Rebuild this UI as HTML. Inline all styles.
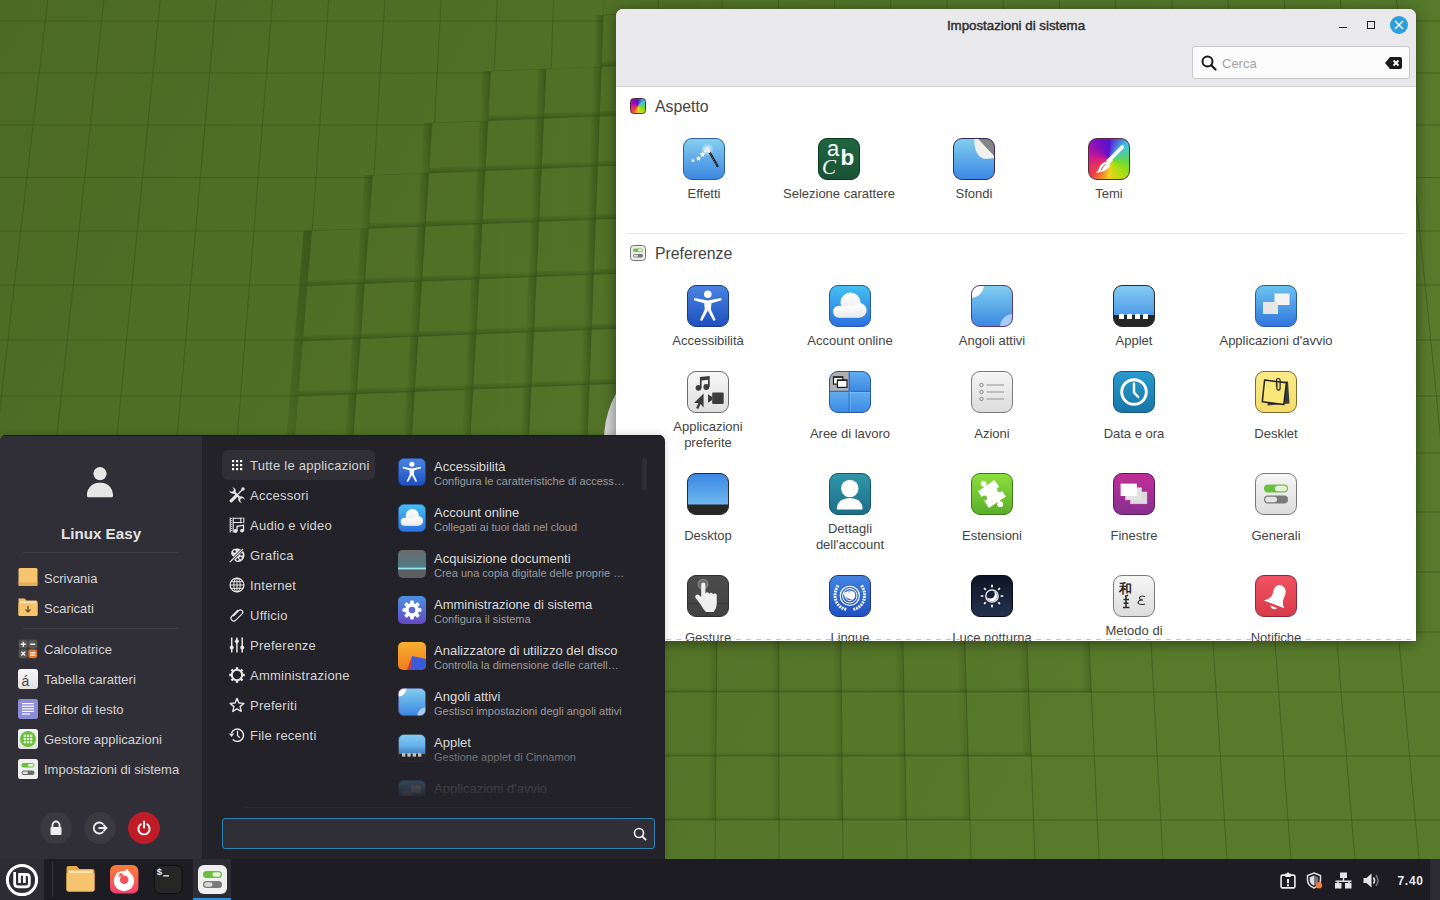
<!DOCTYPE html><html><head><meta charset="utf-8"><style>*{margin:0;padding:0;box-sizing:border-box}
html,body{width:1440px;height:900px;overflow:hidden}
body{position:relative;background:#4e6d27;font-family:"Liberation Sans",sans-serif;}
.abs{position:absolute}
#win{position:absolute;left:616px;top:9px;width:800px;height:632px;background:#fff;border-radius:7px 7px 0 0;overflow:hidden;box-shadow:0 2px 14px rgba(0,0,0,.45)}
#hdr{position:absolute;left:0;top:0;width:800px;height:78px;background:#e9e9ec;border-bottom:1px solid #cfcfd2}
#title{position:absolute;left:0;top:8.5px;width:800px;text-align:center;font-size:13.3px;line-height:16px;font-weight:normal;color:#2e2e2e;-webkit-text-stroke:0.45px #2e2e2e}
.sect{position:absolute;left:39px;font-size:15.8px;line-height:18px;color:#444;white-space:nowrap}
.sicon{position:absolute;left:14px;width:16px;height:16px}
.cell{position:absolute;width:142px;text-align:center;font-size:13px;color:#444;line-height:16px;white-space:nowrap}
.ic{position:absolute;width:42px;height:42px}
#menu{position:absolute;left:0;top:435px;width:665px;height:425px;background:#232228;border-radius:6px 6px 0 0;overflow:hidden;box-shadow:0 0 8px rgba(0,0,0,.18)}
#lpane{position:absolute;left:0;top:0;width:202px;height:425px;background:#302f37}
.mt{position:absolute;font-size:13px;line-height:16px;color:#d4d4d4;white-space:nowrap}
.sub{position:absolute;font-size:11px;line-height:14px;color:#9c9c9c;white-space:nowrap}
#bar{position:absolute;left:0;top:859px;width:1440px;height:41px;background:#1d1c22}
</style></head><body><svg id="wall" width="1440" height="900" style="position:absolute;left:0;top:0"><defs><linearGradient id="shR" x1="0" y1="0" x2="1" y2="0"><stop offset="0" stop-color="#1e3208" stop-opacity="0"/><stop offset="1" stop-color="#1e3208" stop-opacity=".4"/></linearGradient><linearGradient id="shB" x1="0" y1="0" x2="0" y2="1"><stop offset="0" stop-color="#1e3208" stop-opacity="0"/><stop offset="1" stop-color="#1e3208" stop-opacity=".35"/></linearGradient></defs><defs><linearGradient id="wg" x1="0" y1="0" x2="1" y2="0.35"><stop offset="0" stop-color="#4c6a24"/><stop offset="1" stop-color="#587b2b"/></linearGradient></defs><rect width="1440" height="900" fill="url(#wg)"/><path d="M0 -31.0H1440" stroke="#3a541c" stroke-width="1" opacity=".6"/><path d="M0 21.0H1440" stroke="#3a541c" stroke-width="1" opacity=".6"/><path d="M0 73.0H1440" stroke="#3a541c" stroke-width="1" opacity=".6"/><path d="M0 125.0H1440" stroke="#3a541c" stroke-width="1" opacity=".6"/><path d="M0 177.5H1440" stroke="#3a541c" stroke-width="1" opacity=".6"/><path d="M0 231.0H1440" stroke="#3a541c" stroke-width="1" opacity=".6"/><path d="M0 285.0H1440" stroke="#3a541c" stroke-width="1" opacity=".6"/><path d="M0 340.0H1440" stroke="#3a541c" stroke-width="1" opacity=".6"/><path d="M0 396.0H1440" stroke="#3a541c" stroke-width="1" opacity=".6"/><path d="M0 453.0H1440" stroke="#3a541c" stroke-width="1" opacity=".6"/><path d="M0 512.0H1440" stroke="#3a541c" stroke-width="1" opacity=".6"/><path d="M0 572.0H1440" stroke="#3a541c" stroke-width="1" opacity=".6"/><path d="M0 632.0H1440" stroke="#3a541c" stroke-width="1" opacity=".6"/><path d="M0 692.0H1440" stroke="#3a541c" stroke-width="1" opacity=".6"/><path d="M0 756.0H1440" stroke="#3a541c" stroke-width="1" opacity=".6"/><path d="M0 820.0H1440" stroke="#3a541c" stroke-width="1" opacity=".6"/><path d="M0 885.0H1440" stroke="#3a541c" stroke-width="1" opacity=".6"/><path d="M-8.5 0L-121.9 900" stroke="#3a541c" stroke-width="1" opacity=".6"/><path d="M47.7 0L-57.6 900" stroke="#3a541c" stroke-width="1" opacity=".6"/><path d="M103.9 0L6.8 900" stroke="#3a541c" stroke-width="1" opacity=".6"/><path d="M160.1 0L71.1 900" stroke="#3a541c" stroke-width="1" opacity=".6"/><path d="M216.3 0L135.5 900" stroke="#3a541c" stroke-width="1" opacity=".6"/><path d="M272.5 0L199.8 900" stroke="#3a541c" stroke-width="1" opacity=".6"/><path d="M328.7 0L264.2 900" stroke="#3a541c" stroke-width="1" opacity=".6"/><path d="M384.9 0L328.6 900" stroke="#3a541c" stroke-width="1" opacity=".6"/><path d="M441.1 0L392.9 900" stroke="#3a541c" stroke-width="1" opacity=".6"/><path d="M497.3 0L457.3 900" stroke="#3a541c" stroke-width="1" opacity=".6"/><path d="M553.5 0L521.6 900" stroke="#3a541c" stroke-width="1" opacity=".6"/><path d="M609.7 0L586.0 900" stroke="#3a541c" stroke-width="1" opacity=".6"/><path d="M665.9 0L650.4 900" stroke="#3a541c" stroke-width="1" opacity=".6"/><path d="M722.1 0L714.7 900" stroke="#3a541c" stroke-width="1" opacity=".6"/><path d="M778.3 0L779.1 900" stroke="#3a541c" stroke-width="1" opacity=".6"/><path d="M834.5 0L843.4 900" stroke="#3a541c" stroke-width="1" opacity=".6"/><path d="M890.7 0L907.8 900" stroke="#3a541c" stroke-width="1" opacity=".6"/><path d="M946.9 0L972.1 900" stroke="#3a541c" stroke-width="1" opacity=".6"/><path d="M1003.1 0L1036.5 900" stroke="#3a541c" stroke-width="1" opacity=".6"/><path d="M1059.3 0L1100.9 900" stroke="#3a541c" stroke-width="1" opacity=".6"/><path d="M1115.5 0L1165.2 900" stroke="#3a541c" stroke-width="1" opacity=".6"/><path d="M1171.7 0L1229.6 900" stroke="#3a541c" stroke-width="1" opacity=".6"/><path d="M1227.9 0L1293.9 900" stroke="#3a541c" stroke-width="1" opacity=".6"/><path d="M1284.1 0L1358.3 900" stroke="#3a541c" stroke-width="1" opacity=".6"/><path d="M1340.3 0L1422.7 900" stroke="#3a541c" stroke-width="1" opacity=".6"/><path d="M1396.5 0L1487.0 900" stroke="#3a541c" stroke-width="1" opacity=".6"/><path d="M1452.7 0L1551.4 900" stroke="#3a541c" stroke-width="1" opacity=".6"/><path d="M1508.9 0L1615.7 900" stroke="#3a541c" stroke-width="1" opacity=".6"/><path d="M647.0 632.0L655.0 632.0L653.9 692.0L645.9 692.0z" fill="url(#shR)" opacity=".55"/><path d="M591.5 687.0L653.9 687.0L653.9 692.0L591.5 692.0z" fill="url(#shB)" opacity=".55"/><path d="M708.9 632.0L716.9 632.0L716.4 692.0L708.4 692.0z" fill="url(#shR)" opacity=".55"/><path d="M653.9 687.0L716.4 687.0L716.4 692.0L653.9 692.0z" fill="url(#shB)" opacity=".55"/><path d="M770.8 632.0L778.8 632.0L778.9 692.0L770.9 692.0z" fill="url(#shR)" opacity=".55"/><path d="M716.4 687.0L778.9 687.0L778.9 692.0L716.4 692.0z" fill="url(#shB)" opacity=".55"/><path d="M832.8 632.0L840.8 632.0L841.4 692.0L833.4 692.0z" fill="url(#shR)" opacity=".55"/><path d="M778.9 687.0L841.4 687.0L841.4 692.0L778.9 692.0z" fill="url(#shB)" opacity=".55"/><path d="M894.7 632.0L902.7 632.0L903.8 692.0L895.8 692.0z" fill="url(#shR)" opacity=".55"/><path d="M841.4 687.0L903.8 687.0L903.8 692.0L841.4 692.0z" fill="url(#shB)" opacity=".55"/><path d="M956.6 632.0L964.6 632.0L966.3 692.0L958.3 692.0z" fill="url(#shR)" opacity=".55"/><path d="M903.8 687.0L966.3 687.0L966.3 692.0L903.8 692.0z" fill="url(#shB)" opacity=".55"/><path d="M1018.6 632.0L1026.6 632.0L1028.8 692.0L1020.8 692.0z" fill="url(#shR)" opacity=".55"/><path d="M966.3 687.0L1028.8 687.0L1028.8 692.0L966.3 692.0z" fill="url(#shB)" opacity=".55"/><path d="M1080.5 632.0L1088.5 632.0L1091.3 692.0L1083.3 692.0z" fill="url(#shR)" opacity=".55"/><path d="M1028.8 687.0L1091.3 687.0L1091.3 692.0L1028.8 692.0z" fill="url(#shB)" opacity=".55"/><path d="M645.9 692.0L653.9 692.0L652.8 756.0L644.8 756.0z" fill="url(#shR)" opacity=".55"/><path d="M589.8 751.0L652.8 751.0L652.8 756.0L589.8 756.0z" fill="url(#shB)" opacity=".55"/><path d="M708.4 692.0L716.4 692.0L715.9 756.0L707.9 756.0z" fill="url(#shR)" opacity=".55"/><path d="M652.8 751.0L715.9 751.0L715.9 756.0L652.8 756.0z" fill="url(#shB)" opacity=".55"/><path d="M770.9 692.0L778.9 692.0L778.9 756.0L770.9 756.0z" fill="url(#shR)" opacity=".55"/><path d="M715.9 751.0L778.9 751.0L778.9 756.0L715.9 756.0z" fill="url(#shB)" opacity=".55"/><path d="M833.4 692.0L841.4 692.0L842.0 756.0L834.0 756.0z" fill="url(#shR)" opacity=".55"/><path d="M778.9 751.0L842.0 751.0L842.0 756.0L778.9 756.0z" fill="url(#shB)" opacity=".55"/><path d="M895.8 692.0L903.8 692.0L905.1 756.0L897.1 756.0z" fill="url(#shR)" opacity=".55"/><path d="M842.0 751.0L905.1 751.0L905.1 756.0L842.0 756.0z" fill="url(#shB)" opacity=".55"/><path d="M958.3 692.0L966.3 692.0L968.1 756.0L960.1 756.0z" fill="url(#shR)" opacity=".55"/><path d="M905.1 751.0L968.1 751.0L968.1 756.0L905.1 756.0z" fill="url(#shB)" opacity=".55"/><path d="M1020.8 692.0L1028.8 692.0L1031.2 756.0L1023.2 756.0z" fill="url(#shR)" opacity=".55"/><path d="M968.1 751.0L1031.2 751.0L1031.2 756.0L968.1 756.0z" fill="url(#shB)" opacity=".55"/><path d="M644.8 756.0L652.8 756.0L651.7 820.0L643.7 820.0z" fill="url(#shR)" opacity=".55"/><path d="M588.1 815.0L651.7 815.0L651.7 820.0L588.1 820.0z" fill="url(#shB)" opacity=".55"/><path d="M707.9 756.0L715.9 756.0L715.4 820.0L707.4 820.0z" fill="url(#shR)" opacity=".55"/><path d="M651.7 815.0L715.4 815.0L715.4 820.0L651.7 820.0z" fill="url(#shB)" opacity=".55"/><path d="M770.9 756.0L778.9 756.0L779.0 820.0L771.0 820.0z" fill="url(#shR)" opacity=".55"/><path d="M715.4 815.0L779.0 815.0L779.0 820.0L715.4 820.0z" fill="url(#shB)" opacity=".55"/><path d="M834.0 756.0L842.0 756.0L842.6 820.0L834.6 820.0z" fill="url(#shR)" opacity=".55"/><path d="M779.0 815.0L842.6 815.0L842.6 820.0L779.0 820.0z" fill="url(#shB)" opacity=".55"/><path d="M897.1 756.0L905.1 756.0L906.3 820.0L898.3 820.0z" fill="url(#shR)" opacity=".55"/><path d="M842.6 815.0L906.3 815.0L906.3 820.0L842.6 820.0z" fill="url(#shB)" opacity=".55"/><path d="M960.1 756.0L968.1 756.0L969.9 820.0L961.9 820.0z" fill="url(#shR)" opacity=".55"/><path d="M906.3 815.0L969.9 815.0L969.9 820.0L906.3 820.0z" fill="url(#shB)" opacity=".55"/><clipPath id="rc"><path d="M605.2 -37.2L603.2 14.9L601.3 66.4L490.6 70.9L487.8 120.5L432.0 122.7L428.7 172.9L372.4 175.1L368.4 228.3L311.6 230.5L283.6 566.7L700.0 566.7L700.0 -40.0z"/></clipPath><g clip-path="url(#rc)"><rect width="1440" height="900" fill="url(#wg)"/><path d="M650.0 12.7L658.0 12.7L656.5 64.2L648.5 64.2z" fill="url(#shR)"/><path d="M601.3 61.4L656.5 59.2L656.5 64.2L601.3 66.4z" fill="url(#shB)"/><path d="M704.8 10.5L712.8 10.5L711.8 62.0L703.8 62.0z" fill="url(#shR)"/><path d="M656.5 59.2L711.8 57.0L711.8 62.0L656.5 64.2z" fill="url(#shB)"/><path d="M538.0 68.7L546.0 68.7L543.6 118.3L535.6 118.3z" fill="url(#shR)"/><path d="M487.8 115.5L543.6 113.3L543.6 118.3L487.8 120.5z" fill="url(#shB)"/><path d="M593.3 66.4L601.3 66.4L599.4 116.0L591.4 116.0z" fill="url(#shR)"/><path d="M543.6 113.3L599.4 111.0L599.4 116.0L543.6 118.3z" fill="url(#shB)"/><path d="M648.5 64.2L656.5 64.2L655.1 113.8L647.1 113.8z" fill="url(#shR)"/><path d="M599.4 111.0L655.1 108.8L655.1 113.8L599.4 116.0z" fill="url(#shB)"/><path d="M703.8 62.0L711.8 62.0L710.8 111.6L702.8 111.6z" fill="url(#shR)"/><path d="M655.1 108.8L710.8 106.6L710.8 111.6L655.1 113.8z" fill="url(#shB)"/><path d="M479.8 120.5L487.8 120.5L485.0 170.6L477.0 170.6z" fill="url(#shR)"/><path d="M428.7 167.9L485.0 165.6L485.0 170.6L428.7 172.9z" fill="url(#shB)"/><path d="M535.6 118.3L543.6 118.3L541.3 168.3L533.3 168.3z" fill="url(#shR)"/><path d="M485.0 165.6L541.3 163.3L541.3 168.3L485.0 170.6z" fill="url(#shB)"/><path d="M591.4 116.0L599.4 116.0L597.5 166.1L589.5 166.1z" fill="url(#shR)"/><path d="M541.3 163.3L597.5 161.1L597.5 166.1L541.3 168.3z" fill="url(#shB)"/><path d="M647.1 113.8L655.1 113.8L653.7 163.9L645.7 163.9z" fill="url(#shR)"/><path d="M597.5 161.1L653.7 158.9L653.7 163.9L597.5 166.1z" fill="url(#shB)"/><path d="M702.8 111.6L710.8 111.6L709.8 161.6L701.8 161.6z" fill="url(#shR)"/><path d="M653.7 158.9L709.8 156.6L709.8 161.6L653.7 163.9z" fill="url(#shB)"/><path d="M420.7 172.9L428.7 172.9L425.3 226.0L417.3 226.0z" fill="url(#shR)"/><path d="M368.4 223.3L425.3 221.0L425.3 226.0L368.4 228.3z" fill="url(#shB)"/><path d="M477.0 170.6L485.0 170.6L482.0 223.7L474.0 223.7z" fill="url(#shR)"/><path d="M425.3 221.0L482.0 218.7L482.0 223.7L425.3 226.0z" fill="url(#shB)"/><path d="M533.3 168.3L541.3 168.3L538.8 221.4L530.8 221.4z" fill="url(#shR)"/><path d="M482.0 218.7L538.8 216.4L538.8 221.4L482.0 223.7z" fill="url(#shB)"/><path d="M589.5 166.1L597.5 166.1L595.5 219.2L587.5 219.2z" fill="url(#shR)"/><path d="M538.8 216.4L595.5 214.2L595.5 219.2L538.8 221.4z" fill="url(#shB)"/><path d="M645.7 163.9L653.7 163.9L652.1 216.9L644.1 216.9z" fill="url(#shR)"/><path d="M595.5 214.2L652.1 211.9L652.1 216.9L595.5 219.2z" fill="url(#shB)"/><path d="M701.8 161.6L709.8 161.6L708.8 214.6L700.8 214.6z" fill="url(#shR)"/><path d="M652.1 211.9L708.8 209.6L708.8 214.6L652.1 216.9z" fill="url(#shB)"/><path d="M360.4 228.3L368.4 228.3L364.3 283.4L356.3 283.4z" fill="url(#shR)"/><path d="M307.0 280.7L364.3 278.4L364.3 283.4L307.0 285.7z" fill="url(#shB)"/><path d="M417.3 226.0L425.3 226.0L421.7 281.1L413.7 281.1z" fill="url(#shR)"/><path d="M364.3 278.4L421.7 276.1L421.7 281.1L364.3 283.4z" fill="url(#shB)"/><path d="M474.0 223.7L482.0 223.7L479.0 278.8L471.0 278.8z" fill="url(#shR)"/><path d="M421.7 276.1L479.0 273.8L479.0 278.8L421.7 281.1z" fill="url(#shB)"/><path d="M530.8 221.4L538.8 221.4L536.2 276.6L528.2 276.6z" fill="url(#shR)"/><path d="M479.0 273.8L536.2 271.6L536.2 276.6L479.0 278.8z" fill="url(#shB)"/><path d="M587.5 219.2L595.5 219.2L593.4 274.3L585.4 274.3z" fill="url(#shR)"/><path d="M536.2 271.6L593.4 269.3L593.4 274.3L536.2 276.6z" fill="url(#shB)"/><path d="M644.1 216.9L652.1 216.9L650.5 272.0L642.5 272.0z" fill="url(#shR)"/><path d="M593.4 269.3L650.5 267.0L650.5 272.0L593.4 274.3z" fill="url(#shB)"/><path d="M700.8 214.6L708.8 214.6L707.7 269.7L699.7 269.7z" fill="url(#shR)"/><path d="M650.5 267.0L707.7 264.7L707.7 269.7L650.5 272.0z" fill="url(#shB)"/><path d="M356.3 283.4L364.3 283.4L360.3 338.6L352.3 338.6z" fill="url(#shR)"/><path d="M302.4 335.9L360.3 333.6L360.3 338.6L302.4 340.9z" fill="url(#shB)"/><path d="M413.7 281.1L421.7 281.1L418.1 336.3L410.1 336.3z" fill="url(#shR)"/><path d="M360.3 333.6L418.1 331.3L418.1 336.3L360.3 338.6z" fill="url(#shB)"/><path d="M471.0 278.8L479.0 278.8L475.9 334.0L467.9 334.0z" fill="url(#shR)"/><path d="M418.1 331.3L475.9 329.0L475.9 334.0L418.1 336.3z" fill="url(#shB)"/><path d="M528.2 276.6L536.2 276.6L533.6 331.7L525.6 331.7z" fill="url(#shR)"/><path d="M475.9 329.0L533.6 326.7L533.6 331.7L475.9 334.0z" fill="url(#shB)"/><path d="M585.4 274.3L593.4 274.3L591.3 329.3L583.3 329.3z" fill="url(#shR)"/><path d="M533.6 326.7L591.3 324.3L591.3 329.3L533.6 331.7z" fill="url(#shB)"/><path d="M642.5 272.0L650.5 272.0L649.0 327.0L641.0 327.0z" fill="url(#shR)"/><path d="M591.3 324.3L649.0 322.0L649.0 327.0L591.3 329.3z" fill="url(#shB)"/><path d="M699.7 269.7L707.7 269.7L706.6 324.7L698.6 324.7z" fill="url(#shR)"/><path d="M649.0 322.0L706.6 319.7L706.6 324.7L649.0 327.0z" fill="url(#shB)"/><path d="M352.3 338.6L360.3 338.6L356.2 393.8L348.2 393.8z" fill="url(#shR)"/><path d="M297.8 391.1L356.2 388.8L356.2 393.8L297.8 396.1z" fill="url(#shB)"/><path d="M410.1 336.3L418.1 336.3L414.5 391.4L406.5 391.4z" fill="url(#shR)"/><path d="M356.2 388.8L414.5 386.4L414.5 391.4L356.2 393.8z" fill="url(#shB)"/><path d="M467.9 334.0L475.9 334.0L472.8 389.1L464.8 389.1z" fill="url(#shR)"/><path d="M414.5 386.4L472.8 384.1L472.8 389.1L414.5 391.4z" fill="url(#shB)"/><path d="M525.6 331.7L533.6 331.7L531.0 386.8L523.0 386.8z" fill="url(#shR)"/><path d="M472.8 384.1L531.0 381.8L531.0 386.8L472.8 389.1z" fill="url(#shB)"/><path d="M583.3 329.3L591.3 329.3L589.2 384.4L581.2 384.4z" fill="url(#shR)"/><path d="M531.0 381.8L589.2 379.4L589.2 384.4L531.0 386.8z" fill="url(#shB)"/><path d="M641.0 327.0L649.0 327.0L647.4 382.1L639.4 382.1z" fill="url(#shR)"/><path d="M589.2 379.4L647.4 377.1L647.4 382.1L589.2 384.4z" fill="url(#shB)"/><path d="M698.6 324.7L706.6 324.7L705.5 379.8L697.5 379.8z" fill="url(#shR)"/><path d="M647.4 377.1L705.5 374.8L705.5 379.8L647.4 382.1z" fill="url(#shB)"/><path d="M348.2 393.8L356.2 393.8L352.1 448.9L344.1 448.9z" fill="url(#shR)"/><path d="M293.2 446.3L352.1 443.9L352.1 448.9L293.2 451.3z" fill="url(#shB)"/><path d="M406.5 391.4L414.5 391.4L410.9 446.6L402.9 446.6z" fill="url(#shR)"/><path d="M352.1 443.9L410.9 441.6L410.9 446.6L352.1 448.9z" fill="url(#shB)"/><path d="M464.8 389.1L472.8 389.1L469.7 444.2L461.7 444.2z" fill="url(#shR)"/><path d="M410.9 441.6L469.7 439.2L469.7 444.2L410.9 446.6z" fill="url(#shB)"/><path d="M523.0 386.8L531.0 386.8L528.4 441.9L520.4 441.9z" fill="url(#shR)"/><path d="M469.7 439.2L528.4 436.9L528.4 441.9L469.7 444.2z" fill="url(#shB)"/><path d="M581.2 384.4L589.2 384.4L587.1 439.5L579.1 439.5z" fill="url(#shR)"/><path d="M528.4 436.9L587.1 434.5L587.1 439.5L528.4 441.9z" fill="url(#shB)"/><path d="M639.4 382.1L647.4 382.1L645.8 437.2L637.8 437.2z" fill="url(#shR)"/><path d="M587.1 434.5L645.8 432.2L645.8 437.2L587.1 439.5z" fill="url(#shB)"/><path d="M697.5 379.8L705.5 379.8L704.4 434.8L696.4 434.8z" fill="url(#shR)"/><path d="M645.8 432.2L704.4 429.8L704.4 434.8L645.8 437.2z" fill="url(#shB)"/><path d="M344.1 448.9L352.1 448.9L348.0 504.1L340.0 504.1z" fill="url(#shR)"/><path d="M288.6 501.5L348.0 499.1L348.0 504.1L288.6 506.5z" fill="url(#shB)"/><path d="M402.9 446.6L410.9 446.6L407.3 501.7L399.3 501.7z" fill="url(#shR)"/><path d="M348.0 499.1L407.3 496.7L407.3 501.7L348.0 504.1z" fill="url(#shB)"/><path d="M461.7 444.2L469.7 444.2L466.6 499.3L458.6 499.3z" fill="url(#shR)"/><path d="M407.3 496.7L466.6 494.3L466.6 499.3L407.3 501.7z" fill="url(#shB)"/><path d="M520.4 441.9L528.4 441.9L525.8 497.0L517.8 497.0z" fill="url(#shR)"/><path d="M466.6 494.3L525.8 492.0L525.8 497.0L466.6 499.3z" fill="url(#shB)"/><path d="M579.1 439.5L587.1 439.5L585.0 494.6L577.0 494.6z" fill="url(#shR)"/><path d="M525.8 492.0L585.0 489.6L585.0 494.6L525.8 497.0z" fill="url(#shB)"/><path d="M637.8 437.2L645.8 437.2L644.2 492.2L636.2 492.2z" fill="url(#shR)"/><path d="M585.0 489.6L644.2 487.2L644.2 492.2L585.0 494.6z" fill="url(#shB)"/><path d="M696.4 434.8L704.4 434.8L703.3 489.9L695.3 489.9z" fill="url(#shR)"/><path d="M644.2 487.2L703.3 484.9L703.3 489.9L644.2 492.2z" fill="url(#shB)"/><path d="M340.0 504.1L348.0 504.1L343.5 564.3L335.5 564.3z" fill="url(#shR)"/><path d="M283.6 561.7L343.5 559.3L343.5 564.3L283.6 566.7z" fill="url(#shB)"/><path d="M399.3 501.7L407.3 501.7L403.4 561.9L395.4 561.9z" fill="url(#shR)"/><path d="M343.5 559.3L403.4 556.9L403.4 561.9L343.5 564.3z" fill="url(#shB)"/><path d="M458.6 499.3L466.6 499.3L463.2 559.5L455.2 559.5z" fill="url(#shR)"/><path d="M403.4 556.9L463.2 554.5L463.2 559.5L403.4 561.9z" fill="url(#shB)"/><path d="M517.8 497.0L525.8 497.0L523.0 557.1L515.0 557.1z" fill="url(#shR)"/><path d="M463.2 554.5L523.0 552.1L523.0 557.1L463.2 559.5z" fill="url(#shB)"/><path d="M577.0 494.6L585.0 494.6L582.7 554.7L574.7 554.7z" fill="url(#shR)"/><path d="M523.0 552.1L582.7 549.7L582.7 554.7L523.0 557.1z" fill="url(#shB)"/><path d="M636.2 492.2L644.2 492.2L642.5 552.3L634.5 552.3z" fill="url(#shR)"/><path d="M582.7 549.7L642.5 547.3L642.5 552.3L582.7 554.7z" fill="url(#shB)"/><path d="M695.3 489.9L703.3 489.9L702.1 549.9L694.1 549.9z" fill="url(#shR)"/><path d="M642.5 547.3L702.1 544.9L702.1 549.9L642.5 552.3z" fill="url(#shB)"/><path d="M0.0 -13.0L700.0 -41.0" stroke="#3a541c" stroke-width="1" opacity=".6" fill="none"/><path d="M0.0 39.0L700.0 11.0" stroke="#3a541c" stroke-width="1" opacity=".6" fill="none"/><path d="M0.0 90.5L700.0 62.5" stroke="#3a541c" stroke-width="1" opacity=".6" fill="none"/><path d="M0.0 140.0L700.0 112.0" stroke="#3a541c" stroke-width="1" opacity=".6" fill="none"/><path d="M0.0 190.0L700.0 162.0" stroke="#3a541c" stroke-width="1" opacity=".6" fill="none"/><path d="M0.0 243.0L700.0 215.0" stroke="#3a541c" stroke-width="1" opacity=".6" fill="none"/><path d="M0.0 298.0L700.0 270.0" stroke="#3a541c" stroke-width="1" opacity=".6" fill="none"/><path d="M0.0 353.0L700.0 325.0" stroke="#3a541c" stroke-width="1" opacity=".6" fill="none"/><path d="M0.0 408.0L700.0 380.0" stroke="#3a541c" stroke-width="1" opacity=".6" fill="none"/><path d="M0.0 463.0L700.0 435.0" stroke="#3a541c" stroke-width="1" opacity=".6" fill="none"/><path d="M0.0 518.0L700.0 490.0" stroke="#3a541c" stroke-width="1" opacity=".6" fill="none"/><path d="M0.0 578.0L700.0 550.0" stroke="#3a541c" stroke-width="1" opacity=".6" fill="none"/><path d="M279.9 -40L193.0 900" stroke="#3a541c" stroke-width="1" opacity=".6"/><path d="M334.1 -40L255.8 900" stroke="#3a541c" stroke-width="1" opacity=".6"/><path d="M388.4 -40L318.6 900" stroke="#3a541c" stroke-width="1" opacity=".6"/><path d="M442.6 -40L381.3 900" stroke="#3a541c" stroke-width="1" opacity=".6"/><path d="M496.8 -40L444.1 900" stroke="#3a541c" stroke-width="1" opacity=".6"/><path d="M551.1 -40L506.9 900" stroke="#3a541c" stroke-width="1" opacity=".6"/><path d="M605.3 -40L569.6 900" stroke="#3a541c" stroke-width="1" opacity=".6"/><path d="M659.6 -40L632.4 900" stroke="#3a541c" stroke-width="1" opacity=".6"/><path d="M713.8 -40L695.2 900" stroke="#3a541c" stroke-width="1" opacity=".6"/></g><path d="M595.2 14.9L603.2 14.9L601.3 66.4L593.3 66.4z" fill="url(#shR)"/><path d="M482.6 70.9L490.6 70.9L487.8 120.5L479.8 120.5z" fill="url(#shR)"/><path d="M424.0 122.7L432.0 122.7L428.7 172.9L420.7 172.9z" fill="url(#shR)"/><path d="M364.4 175.1L372.4 175.1L368.4 228.3L360.4 228.3z" fill="url(#shR)"/><path d="M303.6 230.5L311.6 230.5L283.6 566.7L275.6 566.7z" fill="url(#shR)"/><defs><linearGradient id="gc" x1="0" y1="0" x2="1" y2="0"><stop offset="0" stop-color="#d8d8d8"/><stop offset="1" stop-color="#8a8a8a"/></linearGradient></defs><circle cx="700" cy="440" r="96" fill="url(#gc)"/></svg>
<div id="win"><div id="hdr"><div id="title">Impostazioni di sistema</div><div class="abs" style="left:723px;top:17.6px;width:8px;height:1.3px;background:#222"></div><div class="abs" style="left:751px;top:12px;width:8px;height:8px;border:1.4px solid #222"></div><div class="abs" style="left:774px;top:7px;width:18px;height:18px;border-radius:50%;background:#2a9fde"></div><svg width="18" height="18" viewBox="0 0 18 18" style="position:absolute;left:774px;top:7px"><path d="M5 5L13 13M13 5L5 13" stroke="#fff" stroke-width="1.5"/></svg><div class="abs" style="left:576px;top:37px;width:218px;height:33px;background:#fbfbfb;border:1px solid #c9c9cc;border-radius:3px"></div><svg width="16" height="16" viewBox="0 0 16 16" style="position:absolute;left:585px;top:46px"><circle cx="6.5" cy="6.5" r="5" fill="none" stroke="#1a1a1a" stroke-width="2"/><path d="M10.3 10.3L14.5 14.5" stroke="#1a1a1a" stroke-width="2.2" stroke-linecap="round"/></svg><div class="abs" style="left:606px;top:46.5px;font-size:13px;line-height:16px;color:#a3a3a3">Cerca</div><svg width="17" height="12" viewBox="0 0 17 12" style="position:absolute;left:769px;top:48px"><path d="M5 0H15a2 2 0 0 1 2 2v8a2 2 0 0 1-2 2H5L0 6z" fill="#1a1a1a"/><path d="M8.5 3.5l5 5M13.5 3.5l-5 5" stroke="#fff" stroke-width="1.8"/></svg></div><div class="sicon" style="top:89px;border-radius:3.5px;border:1px solid #5a2a40;background:conic-gradient(from 0deg,#5a10d0,#3fc4e0 50deg,#6ad83a 100deg,#a8e010 135deg,#f0d020 180deg,#f04040 225deg,#d01890 275deg,#8010c0 320deg,#5a10d0)"></div><div class="sect" style="top:88.6px">Aspetto</div><div class="abs" style="left:10px;top:224px;width:780px;height:1px;background:#e4e4e6"></div><div class="sicon" style="top:236px"><svg width="16" height="16" viewBox="0 0 16 16" style="position:absolute;"><rect x=".5" y=".5" width="15" height="15" rx="3" fill="#ececec" stroke="#777" stroke-width="1"/><rect x="3" y="3.5" width="10" height="3.5" rx="1.75" fill="#70c040"/><rect x="3" y="9" width="10" height="3.5" rx="1.75" fill="#777"/><rect x="8" y="4.2" width="4.3" height="2.1" rx="1" fill="#e8f8e0"/><rect x="3.7" y="9.7" width="4.3" height="2.1" rx="1" fill="#ddd"/></svg></div><div class="sect" style="top:235.8px">Preferenze</div><div class="ic" style="left:67px;top:129px"><svg width="42" height="42" viewBox="0 0 42 42" style="position:absolute;"><defs><linearGradient id="g1" x1="0" y1="0" x2="0" y2="1"><stop offset="0" stop-color="#86d0f0"/><stop offset="1" stop-color="#3a86e0"/></linearGradient></defs><rect x="0.5" y="0.5" width="41" height="41" rx="8.5" fill="url(#g1)" stroke="#2f5f9e" stroke-width="1"/><defs><radialGradient id="glw"><stop offset="0" stop-color="#fff" stop-opacity=".95"/><stop offset="1" stop-color="#fff" stop-opacity="0"/></radialGradient></defs><circle cx="24.5" cy="11.5" r="6.5" fill="url(#glw)"/><polygon points="10.00,20.30 10.58,21.70 12.09,21.82 10.94,22.81 11.29,24.28 10.00,23.49 8.71,24.28 9.06,22.81 7.91,21.82 9.42,21.70" fill="#fff"/><polygon points="15.50,17.80 16.21,19.52 18.07,19.67 16.66,20.88 17.09,22.68 15.50,21.71 13.91,22.68 14.34,20.88 12.93,19.67 14.79,19.52" fill="#fff"/><polygon points="19.50,13.30 20.35,15.34 22.54,15.51 20.87,16.94 21.38,19.09 19.50,17.94 17.62,19.09 18.13,16.94 16.46,15.51 18.65,15.34" fill="#fff"/><polygon points="22.50,9.90 23.19,11.55 24.97,11.70 23.61,12.86 24.03,14.60 22.50,13.67 20.97,14.60 21.39,12.86 20.03,11.70 21.81,11.55" fill="#fff"/><path d="M25 11.5L34.5 28" stroke="#1e1e1e" stroke-width="2.4" stroke-linecap="round"/><path d="M26 13.5L34 27.5" stroke="#888" stroke-width=".8" stroke-dasharray="1 1.2"/><path d="M24.8 11.2L26.3 13.8" stroke="#fff" stroke-width="2.4" stroke-linecap="round"/></svg></div><div class="cell" style="left:17px;top:176.5px">Effetti</div><div class="ic" style="left:202px;top:129px"><svg width="42" height="42" viewBox="0 0 42 42" style="position:absolute;"><defs><linearGradient id="g2" x1="0" y1="0" x2="0" y2="1"><stop offset="0" stop-color="#206640"/><stop offset="1" stop-color="#185234"/></linearGradient></defs><rect x="0.5" y="0.5" width="41" height="41" rx="8.5" fill="url(#g2)" stroke="#0e3a22" stroke-width="1"/><text x="9" y="18" font-family="Liberation Sans" font-size="22" fill="#fff">a</text><text x="4" y="36" font-family="Liberation Serif" font-style="italic" font-size="21" fill="#fff">C</text><text x="22.5" y="27.3" font-family="Liberation Sans" font-weight="bold" font-size="22.5" fill="#fff">b</text></svg></div><div class="cell" style="left:152px;top:176.5px">Selezione carattere</div><div class="ic" style="left:337px;top:129px"><svg width="42" height="42" viewBox="0 0 42 42" style="position:absolute;"><defs><linearGradient id="g3" x1="0" y1="0" x2="0" y2="1"><stop offset="0" stop-color="#82d0ee"/><stop offset="1" stop-color="#3a86e4"/></linearGradient><clipPath id="g4"><rect x="0.5" y="0.5" width="41" height="41" rx="8.5"/></clipPath></defs><g clip-path="url(#g4)"><rect width="42" height="42" fill="url(#g3)"/><path d="M24.2 0H42V19z" fill="#858585"/><path d="M21.4 0C21 8 22.5 17 30 20.5C34 21.5 38 20 42 20V19L24.2 0z" fill="#f2f0ea"/></g><rect x="0.5" y="0.5" width="41" height="41" rx="8.5" fill="none" stroke="#3a2a60" stroke-width="1"/></svg></div><div class="cell" style="left:287px;top:176.5px">Sfondi</div><div class="ic" style="left:472px;top:129px"><div style="position:absolute;left:0;top:0;width:42px;height:42px;border-radius:9px;border:1px solid #5a2a40;background:conic-gradient(from 0deg at 50% 50%,#5a10d0,#3fc4e0 50deg,#6ad83a 100deg,#a8e010 135deg,#f0d020 180deg,#f04040 225deg,#d01890 275deg,#8010c0 320deg,#5a10d0)"></div><svg width="42" height="42" viewBox="0 0 42 42" style="position:absolute;"><path d="M34.3 9L21.3 22.2" stroke="#fff" stroke-width="3.6" stroke-linecap="round"/><path d="M23.3 20.6L19.8 24.2" stroke="#fff" stroke-width="4.6"/><path d="M20.5 23.5C16 23.5 12.5 26 11.2 30C10.6 32 9.2 33.6 7.5 34.6C12.5 34.8 18 33 21 29.3C22.4 27.5 22.6 25 20.5 23.5z" fill="#fff"/><path d="M17.5 26.2Q14 29 13 32.5" stroke="#c03060" stroke-width=".9" fill="none"/></svg></div><div class="cell" style="left:422px;top:176.5px">Temi</div><div class="ic" style="left:71px;top:276px"><svg width="42" height="42" viewBox="0 0 42 42" style="position:absolute;"><defs><linearGradient id="g5" x1="0" y1="0" x2="0" y2="1"><stop offset="0" stop-color="#4a84e2"/><stop offset="1" stop-color="#1d4fbf"/></linearGradient></defs><rect x="0.5" y="0.5" width="41" height="41" rx="8.5" fill="url(#g5)" stroke="#1a3a80" stroke-width="1"/><circle cx="20.8" cy="9.3" r="3.8" fill="#fff"/><path d="M7.3 13L20.8 15.6L34.2 13L34.6 15.2L24.4 18.2L23.9 24.6L28.6 35L26.6 35.9L20.8 25.6L15 35.9L13 35L17.7 24.6L17.2 18.2L6.9 15.2z" fill="#fff"/></svg></div><div class="cell" style="left:21px;top:323.5px">Accessibilità</div><div class="ic" style="left:213px;top:276px"><svg width="42" height="42" viewBox="0 0 42 42" style="position:absolute;"><defs><linearGradient id="g6" x1="0" y1="0" x2="0" y2="1"><stop offset="0" stop-color="#44c0f0"/><stop offset="1" stop-color="#2a70e0"/></linearGradient></defs><rect x="0.5" y="0.5" width="41" height="41" rx="8.5" fill="url(#g6)" stroke="#2a5aa0" stroke-width="1"/><defs><linearGradient id="g7" x1="0" y1="0" x2="0" y2="1"><stop offset="0" stop-color="#ffffff"/><stop offset="1" stop-color="#e8e8ea"/></linearGradient></defs><g fill="url(#g7)"><circle cx="10" cy="26.8" r="6"/><circle cx="21.5" cy="17.5" r="10"/><circle cx="30.3" cy="25.4" r="7.3"/><rect x="10" y="21" width="20.5" height="11.8"/></g></svg></div><div class="cell" style="left:163px;top:323.5px">Account online</div><div class="ic" style="left:355px;top:276px"><svg width="42" height="42" viewBox="0 0 42 42" style="position:absolute;"><defs><linearGradient id="g8" x1="0" y1="0" x2="0" y2="1"><stop offset="0" stop-color="#82d0ee"/><stop offset="1" stop-color="#3a86e4"/></linearGradient><clipPath id="g9"><rect x="0.5" y="0.5" width="41" height="41" rx="8.5"/></clipPath></defs><g clip-path="url(#g9)"><rect width="42" height="42" fill="url(#g8)"/><circle cx="0" cy="0" r="12.8" fill="#fff"/><circle cx="42" cy="42" r="13" fill="#a8ccf4"/></g><rect x="0.5" y="0.5" width="41" height="41" rx="8.5" fill="none" stroke="#5a3c78" stroke-width="1"/></svg></div><div class="cell" style="left:305px;top:323.5px">Angoli attivi</div><div class="ic" style="left:497px;top:276px"><svg width="42" height="42" viewBox="0 0 42 42" style="position:absolute;"><defs><linearGradient id="g10" x1="0" y1="0" x2="0" y2="1"><stop offset="0" stop-color="#86cdf2"/><stop offset="1" stop-color="#3a88e6"/></linearGradient><clipPath id="g11"><rect x="0.5" y="0.5" width="41" height="41" rx="8.5"/></clipPath></defs><g clip-path="url(#g11)"><rect width="42" height="42" fill="url(#g10)"/><rect y="30" width="42" height="12" fill="#262626"/><rect x="6" y="29" width="5" height="5" fill="#fff"/><rect x="14" y="29" width="5" height="5" fill="#fff"/><rect x="22" y="29" width="5" height="5" fill="#fff"/><rect x="30" y="29" width="5" height="5" fill="#fff"/></g><rect x="0.5" y="0.5" width="41" height="41" rx="8.5" fill="none" stroke="#2a2a2a" stroke-width="1"/></svg></div><div class="cell" style="left:447px;top:323.5px">Applet</div><div class="ic" style="left:639px;top:276px"><svg width="42" height="42" viewBox="0 0 42 42" style="position:absolute;"><defs><linearGradient id="g12" x1="0" y1="0" x2="0" y2="1"><stop offset="0" stop-color="#6cc4f0"/><stop offset="1" stop-color="#2f76de"/></linearGradient></defs><rect x="0.5" y="0.5" width="41" height="41" rx="8.5" fill="url(#g12)" stroke="#2a5aa0" stroke-width="1"/><rect x="19.5" y="8.5" width="15" height="11.5" fill="#f4f4f4"/><rect x="8" y="17" width="15" height="12" fill="#e6e6e6"/></svg></div><div class="cell" style="left:589px;top:323.5px">Applicazioni d'avvio</div><div class="ic" style="left:71px;top:362px"><svg width="42" height="42" viewBox="0 0 42 42" style="position:absolute;"><defs><linearGradient id="g13" x1="0" y1="0" x2="0" y2="1"><stop offset="0" stop-color="#f8f8f8"/><stop offset="1" stop-color="#dedede"/></linearGradient></defs><rect x="0.5" y="0.5" width="41" height="41" rx="8.5" fill="url(#g13)" stroke="#6a6a6a" stroke-width="1"/><path d="M12.9 6L22.7 5V16H21V8.8L14.6 9.6V17H12.9z" fill="#3c3c3c"/><circle cx="11.5" cy="16.8" r="2.9" fill="#3c3c3c"/><circle cx="19.3" cy="16" r="2.9" fill="#3c3c3c"/><path d="M16.6 22.6V36.5L13.6 33L11.2 38L9.1 37.1L11.4 32.1L7 32z" fill="#3c3c3c"/><path d="M21 23.3L25.2 26V29L21 31.7z" fill="#3c3c3c"/><rect x="25.2" y="21.6" width="11.5" height="11.5" rx="1" fill="#3c3c3c"/></svg></div><div class="cell" style="left:21px;top:409.5px">Applicazioni<br>preferite</div><div class="ic" style="left:213px;top:362px"><svg width="42" height="42" viewBox="0 0 42 42" style="position:absolute;"><defs><linearGradient id="g16" x1="0" y1="0" x2="0" y2="1"><stop offset="0" stop-color="#5aaaee"/><stop offset="1" stop-color="#3a88e4"/></linearGradient><clipPath id="g17"><rect x="0.5" y="0.5" width="41" height="41" rx="8.5"/></clipPath></defs><g clip-path="url(#g17)"><rect width="42" height="42" fill="url(#g16)"/><defs><linearGradient id="g14" x1="0" y1="0" x2="0" y2="1"><stop offset="0" stop-color="#62aeee"/><stop offset="1" stop-color="#3a88e4"/></linearGradient></defs><rect x="0" y="0" width="21.5" height="21.5" fill="url(#g14)"/><rect x="20.5" y="0" width="21.5" height="21.5" fill="url(#g14)"/><rect x="0" y="20.5" width="21.5" height="21.5" fill="url(#g14)"/><rect x="20.5" y="20.5" width="21.5" height="21.5" fill="url(#g14)"/><rect x="0" y="0" width="20.2" height="20.2" fill="#b0b0b0"/><path d="M20.2 0V42M0 20.4H42" stroke="#2a6ac8" stroke-width="1.2"/><path d="M21.2 20V42M20 21.4H42" stroke="#86c4f4" stroke-width=".6"/><rect x="4.5" y="5.9" width="9.3" height="7.2" fill="#fff" stroke="#1a1a1a" stroke-width="1.2"/><rect x="4.5" y="5.6" width="9.3" height="1.2" fill="#1a1a1a"/><rect x="8.4" y="9" width="9.6" height="7.4" fill="#fff" stroke="#1a1a1a" stroke-width="1.2"/><rect x="8.4" y="8.7" width="9.6" height="1.2" fill="#1a1a1a"/></g><rect x="0.5" y="0.5" width="41" height="41" rx="8.5" fill="none" stroke="#2a5aa0" stroke-width="1"/></svg></div><div class="cell" style="left:163px;top:417.3px">Aree di lavoro</div><div class="ic" style="left:355px;top:362px"><svg width="42" height="42" viewBox="0 0 42 42" style="position:absolute;"><defs><linearGradient id="g18" x1="0" y1="0" x2="0" y2="1"><stop offset="0" stop-color="#f6f6f6"/><stop offset="1" stop-color="#dcdcdc"/></linearGradient></defs><rect x="0.5" y="0.5" width="41" height="41" rx="8.5" fill="url(#g18)" stroke="#7a7a7a" stroke-width="1"/><circle cx="10.5" cy="14" r="1.7" fill="none" stroke="#8a8a8a" stroke-width="1"/><path d="M15.5 14H33" stroke="#9a9a9a" stroke-width="1.1"/><circle cx="10.5" cy="21" r="1.7" fill="none" stroke="#8a8a8a" stroke-width="1"/><path d="M15.5 21H33" stroke="#9a9a9a" stroke-width="1.1"/><circle cx="10.5" cy="28" r="1.7" fill="none" stroke="#8a8a8a" stroke-width="1"/><path d="M15.5 28H33" stroke="#9a9a9a" stroke-width="1.1"/></svg></div><div class="cell" style="left:305px;top:417.3px">Azioni</div><div class="ic" style="left:497px;top:362px"><svg width="42" height="42" viewBox="0 0 42 42" style="position:absolute;"><defs><linearGradient id="g19" x1="0" y1="0" x2="0" y2="1"><stop offset="0" stop-color="#2a9ad0"/><stop offset="1" stop-color="#1676a6"/></linearGradient></defs><rect x="0.5" y="0.5" width="41" height="41" rx="8.5" fill="url(#g19)" stroke="#13587e" stroke-width="1"/><circle cx="21" cy="21" r="12.3" fill="none" stroke="#fff" stroke-width="2.9"/><path d="M21 12.5v9l4.2 4.5" stroke="#fff" stroke-width="2.4" fill="none" stroke-linecap="round" stroke-linejoin="round"/></svg></div><div class="cell" style="left:447px;top:417.3px">Data e ora</div><div class="ic" style="left:639px;top:362px"><svg width="42" height="42" viewBox="0 0 42 42" style="position:absolute;"><defs><linearGradient id="g20" x1="0" y1="0" x2="0" y2="1"><stop offset="0" stop-color="#fbec88"/><stop offset="1" stop-color="#f4dc6a"/></linearGradient></defs><rect x="0.5" y="0.5" width="41" height="41" rx="8.5" fill="url(#g20)" stroke="#7a6c30" stroke-width="1"/><path d="M14.5 11.5L33 10.5L34.5 32.5L12.5 34.5z" fill="#3a3a3a"/><path d="M9.6 9L31.4 11.8L28.8 33.6L7.3 30.8z" fill="#f8e87a" stroke="#222" stroke-width="1.5" stroke-linejoin="round"/><path d="M21.5 15.5V9.3a1.8 1.8 0 0 1 3.6 0V17.5a1.6 1.6 0 0 1-3.2 0V12" stroke="#222" stroke-width="1.2" fill="none"/></svg></div><div class="cell" style="left:589px;top:417.3px">Desklet</div><div class="ic" style="left:71px;top:464px"><svg width="42" height="42" viewBox="0 0 42 42" style="position:absolute;"><defs><linearGradient id="g21" x1="0" y1="0" x2="0" y2="1"><stop offset="0" stop-color="#3a86e4"/><stop offset="1" stop-color="#80c8f2"/></linearGradient><clipPath id="g22"><rect x="0.5" y="0.5" width="41" height="41" rx="8.5"/></clipPath></defs><g clip-path="url(#g22)"><rect width="42" height="42" fill="url(#g21)"/><rect y="31.5" width="42" height="10.5" fill="#262626"/></g><rect x="0.5" y="0.5" width="41" height="41" rx="8.5" fill="none" stroke="#2a2a2a" stroke-width="1"/></svg></div><div class="cell" style="left:21px;top:519.3px">Desktop</div><div class="ic" style="left:213px;top:464px"><svg width="42" height="42" viewBox="0 0 42 42" style="position:absolute;"><defs><linearGradient id="g23" x1="0" y1="0" x2="0" y2="1"><stop offset="0" stop-color="#3096a8"/><stop offset="1" stop-color="#1c6e88"/></linearGradient></defs><rect x="0.5" y="0.5" width="41" height="41" rx="8.5" fill="url(#g23)" stroke="#14586a" stroke-width="1"/><circle cx="20.8" cy="15.5" r="8.7" fill="#fff"/><path d="M8.6 36.6Q7.5 36.6 7.8 35Q9.2 25 20.8 25Q32.4 25 33.6 35Q33.9 36.6 32.8 36.6z" fill="#fff"/></svg></div><div class="cell" style="left:163px;top:511.5px">Dettagli<br>dell'account</div><div class="ic" style="left:355px;top:464px"><svg width="42" height="42" viewBox="0 0 42 42" style="position:absolute;"><defs><linearGradient id="g24" x1="0" y1="0" x2="0" y2="1"><stop offset="0" stop-color="#8ce03c"/><stop offset="1" stop-color="#5aae2a"/></linearGradient></defs><rect x="0.5" y="0.5" width="41" height="41" rx="8.5" fill="url(#g24)" stroke="#3f7a20" stroke-width="1"/><path d="M7.1 18.3L23.4 7.1L34.9 23.4L17.8 34.9z" fill="#fff"/><circle cx="12.6" cy="10.6" r="2.9" fill="#fff"/><circle cx="29.2" cy="31.2" r="2.9" fill="#fff"/><path d="M12.6 10.6L14.5 14M29.2 31.2L27.5 28" stroke="#fff" stroke-width="2.4"/><circle cx="28.6" cy="16.6" r="2.6" fill="#78cc34"/><circle cx="13.4" cy="25" r="2.6" fill="#6ec230"/></svg></div><div class="cell" style="left:305px;top:519.3px">Estensioni</div><div class="ic" style="left:497px;top:464px"><svg width="42" height="42" viewBox="0 0 42 42" style="position:absolute;"><defs><linearGradient id="g25" x1="0" y1="0" x2="0" y2="1"><stop offset="0" stop-color="#c22e98"/><stop offset="1" stop-color="#86308e"/></linearGradient></defs><rect x="0.5" y="0.5" width="41" height="41" rx="8.5" fill="url(#g25)" stroke="#5a1a5e" stroke-width="1"/><rect x="17.6" y="19" width="16.3" height="11.8" fill="#dcdcdc" stroke="#f4d0f0" stroke-width=".5"/><rect x="12.6" y="14.8" width="16" height="12.1" fill="#e2e2e2" stroke="#f4d0f0" stroke-width=".5"/><rect x="7.6" y="10.6" width="16.2" height="12.4" fill="#fff"/></svg></div><div class="cell" style="left:447px;top:519.3px">Finestre</div><div class="ic" style="left:639px;top:464px"><svg width="42" height="42" viewBox="0 0 42 42" style="position:absolute;"><defs><linearGradient id="g26" x1="0" y1="0" x2="0" y2="1"><stop offset="0" stop-color="#f6f6f6"/><stop offset="1" stop-color="#dcdcdc"/></linearGradient></defs><rect x="0.5" y="0.5" width="41" height="41" rx="8.5" fill="url(#g26)" stroke="#7a7a7a" stroke-width="1"/><rect x="9" y="11.5" width="24" height="8" rx="4" fill="#6cc040"/><rect x="20" y="12.8" width="11.8" height="5.4" rx="2.7" fill="#e6f4dc"/><rect x="9" y="22.5" width="24" height="8" rx="4" fill="#7a7a7a"/><rect x="10.2" y="23.8" width="11.8" height="5.4" rx="2.7" fill="#e4e4e4"/></svg></div><div class="cell" style="left:589px;top:519.3px">Generali</div><div class="ic" style="left:71px;top:566px"><svg width="42" height="42" viewBox="0 0 42 42" style="position:absolute;"><defs><linearGradient id="g27" x1="0" y1="0" x2="0" y2="1"><stop offset="0" stop-color="#4c4c4c"/><stop offset="1" stop-color="#424242"/></linearGradient></defs><rect x="0.5" y="0.5" width="41" height="41" rx="8.5" fill="url(#g27)" stroke="#2e2e2e" stroke-width="1"/><path d="M1 28.5H41M21 28.5V41" stroke="#363636" stroke-width="1"/><circle cx="16" cy="9.2" r="4.8" fill="#6a6a6a" stroke="#868686" stroke-width="1.3"/><path d="M14 30L8.5 22.8a2.2 2.2 0 0 1 3.4-2.7L14.2 22V9.5a2 2 0 0 1 4.2 0V18.5a2 2 0 0 1 3.8 .5 2 2 0 0 1 3.8 .6 2 2 0 0 1 3.8 1.1V28q0 5-3 9H19q-3-3-5-7z" fill="#efefef"/></svg></div><div class="cell" style="left:21px;top:621.3px">Gesture</div><div class="ic" style="left:213px;top:566px"><svg width="42" height="42" viewBox="0 0 42 42" style="position:absolute;"><defs><linearGradient id="g28" x1="0" y1="0" x2="0" y2="1"><stop offset="0" stop-color="#4484e4"/><stop offset="1" stop-color="#1f50be"/></linearGradient></defs><rect x="0.5" y="0.5" width="41" height="41" rx="8.5" fill="url(#g28)" stroke="#1a3a80" stroke-width="1"/><g fill="none" stroke="#fff"><circle cx="20.8" cy="20.8" r="9.6" stroke-width="1.1"/><circle cx="20.8" cy="20.8" r="7.2" stroke-width="1"/><circle cx="20.8" cy="20.8" r="4.8" stroke-width=".9"/></g><path d="M14 18.5q3 -3 6 -1 3-3 5.5 0 1.5 3-.5 6-3 2-5 0-3 0-6-5z" fill="#fff"/><g fill="none" stroke="#fff" stroke-width="3" stroke-dasharray="1.8 1"><path d="M9 10.5q-5.5 9 -1 17.5q3.5 5.5 10 6.5"/><path d="M32.6 10.5q5.5 9 1 17.5q-3.5 5.5-10 6.5"/></g></svg></div><div class="cell" style="left:163px;top:621.3px">Lingue</div><div class="ic" style="left:355px;top:566px"><svg width="42" height="42" viewBox="0 0 42 42" style="position:absolute;"><defs><linearGradient id="g29" x1="0" y1="0" x2="0" y2="1"><stop offset="0" stop-color="#0d1424"/><stop offset="1" stop-color="#243250"/></linearGradient></defs><rect x="0.5" y="0.5" width="41" height="41" rx="8.5" fill="url(#g29)" stroke="#080c16" stroke-width="1"/><circle cx="21" cy="21" r="5.2" fill="#fff"/><circle cx="19.3" cy="19.1" r="4.5" fill="#16203a"/><circle cx="21" cy="21" r="6.2" fill="none" stroke="#fff" stroke-width="1.3"/><g stroke="#fff" stroke-width="1.7" stroke-linecap="round"><path d="M30.3 21.0L31.6 21.0"/><path d="M27.6 27.6L28.5 28.5"/><path d="M21.0 30.3L21.0 31.6"/><path d="M14.4 27.6L13.5 28.5"/><path d="M11.7 21.0L10.4 21.0"/><path d="M14.4 14.4L13.5 13.5"/><path d="M21.0 11.7L21.0 10.4"/><path d="M27.6 14.4L28.5 13.5"/></g></svg></div><div class="cell" style="left:305px;top:621.3px">Luce notturna</div><div class="ic" style="left:497px;top:566px"><svg width="42" height="42" viewBox="0 0 42 42" style="position:absolute;"><defs><linearGradient id="g30" x1="0" y1="0" x2="0" y2="1"><stop offset="0" stop-color="#f6f6f6"/><stop offset="1" stop-color="#dcdcdc"/></linearGradient></defs><rect x="0.5" y="0.5" width="41" height="41" rx="8.5" fill="url(#g30)" stroke="#7a7a7a" stroke-width="1"/><text x="6.2" y="17.6" font-family="Liberation Serif" font-weight="bold" font-size="12.5" fill="#2a2a2a">和</text><path d="M10.5 24.5h5.5M13 22v10.5M10.5 28.2h5M10 32.5h6.5M12 21.5l3-1.2" stroke="#2a2a2a" stroke-width="1.5"/><path d="M32 21.5q-4-1.5-5.5 1q0 2.5 3.5 2.5-5 0-5 3 1.5 2.5 7 1" stroke="#2a2a2a" stroke-width="1.1" fill="none"/></svg></div><div class="cell" style="left:447px;top:613.5px">Metodo di<br>input</div><div class="ic" style="left:639px;top:566px"><svg width="42" height="42" viewBox="0 0 42 42" style="position:absolute;"><defs><linearGradient id="g31" x1="0" y1="0" x2="0" y2="1"><stop offset="0" stop-color="#f05262"/><stop offset="1" stop-color="#d83a4a"/></linearGradient></defs><rect x="0.5" y="0.5" width="41" height="41" rx="8.5" fill="url(#g31)" stroke="#8a2a3a" stroke-width="1"/><path d="M25 10C21.5 9.8 19 12.5 18 17.5C17 22 14.5 24.3 8.8 25.4L29.2 33.2C27.2 29.3 27.6 25.5 29.6 21.3C31.8 16.5 30.5 12.3 27 10.8C26.8 10 26 9.7 25 10z" fill="#fff"/><path d="M15.5 30.5Q16 34.5 20 34.3Q21.5 34 22 33z" fill="#fff"/></svg></div><div class="cell" style="left:589px;top:621.3px">Notifiche</div><div class="abs" style="left:0;top:630px;width:800px;height:1px;background:repeating-linear-gradient(to right,#c4c4c4 0 5px,transparent 5px 10px)"></div></div>
<div id="menu"><div class="abs" style="left:0;top:0;width:665px;height:1px;background:#1a1a1c;z-index:5"></div><div id="lpane"><svg width="28" height="32" viewBox="0 0 28 32" style="position:absolute;left:87px;top:32px"><circle cx="13" cy="6.6" r="6.6" fill="#e6e6e6"/><path d="M1 30.2a1.2 1.2 0 0 1-1-1.2 12 12 0 0 1 12-13.2h2a12 12 0 0 1 12 13.2 1.2 1.2 0 0 1-1 1.2z" fill="#e6e6e6"/></svg><div class="abs" style="left:0;top:89.7px;width:202px;text-align:center;font-size:15.2px;line-height:18px;font-weight:bold;color:#e3e3e3">Linux Easy</div><div class="abs" style="left:23px;top:117px;width:155px;height:1px;background:#3f3e46"></div><div class="abs" style="left:23px;top:193px;width:155px;height:1px;background:#3f3e46"></div><div class="abs" style="left:18px;top:132px;width:20px;height:20px"><svg width="20" height="20" viewBox="0 0 20 20" style="position:absolute;"><path d="M0.5 2.5a1.5 1.5 0 0 1 1.5-1.5h16a1.5 1.5 0 0 1 1.5 1.5v15a1.5 1.5 0 0 1-1.5 1.5h-16a1.5 1.5 0 0 1-1.5-1.5z" fill="#f6c46c"/><rect x="0.5" y="15.5" width="19" height="3.5" rx="1" fill="#e3ad55"/></svg></div><div class="mt" style="left:44px;top:135.5px">Scrivania</div><div class="abs" style="left:18px;top:162px;width:20px;height:20px"><svg width="20" height="20" viewBox="0 0 20 20" style="position:absolute;"><path d="M0.5 1.5h6l2 2h9.5a1.5 1.5 0 0 1 1.5 1.5v12.5a1.5 1.5 0 0 1-1.5 1.5h-16a1.5 1.5 0 0 1-1.5-1.5z" fill="#f3c06a"/><rect x="2" y="4.5" width="16" height="1.5" fill="#fbe6b8"/><path d="M0.5 6h19v11.5a1.5 1.5 0 0 1-1.5 1.5h-16a1.5 1.5 0 0 1-1.5-1.5z" fill="#f6c46c"/><path d="M10 9v6M7.5 12.5L10 15l2.5-2.5" stroke="#6a5228" stroke-width="1.4" fill="none"/></svg></div><div class="mt" style="left:44px;top:165.5px">Scaricati</div><div class="abs" style="left:18px;top:204.0px;width:20px;height:20px"><svg width="20" height="20" viewBox="0 0 20 20" style="position:absolute;"><rect x="0" y="0" width="20" height="20" rx="3" fill="#3a3a3a"/><rect x="1" y="1" width="8.6" height="8.6" rx="2" fill="#565656"/><rect x="10.4" y="1" width="8.6" height="8.6" rx="2" fill="#565656"/><rect x="1" y="10.4" width="8.6" height="8.6" rx="2" fill="#565656"/><rect x="10.4" y="10.4" width="8.6" height="8.6" rx="2" fill="#f07020"/><path d="M2.8 5.3h5M5.3 2.8v5M12.2 5.3h5M3.4 12.8l3.8 3.8M7.2 12.8l-3.8 3.8M12.3 13.8h5M12.3 16.2h5" stroke="#f2f2f2" stroke-width="1.4"/></svg></div><div class="mt" style="left:44px;top:206.8px">Calcolatrice</div><div class="abs" style="left:18px;top:234.0px;width:20px;height:20px"><svg width="20" height="20" viewBox="0 0 20 20" style="position:absolute;"><defs><linearGradient id="g32" x1="0" y1="0" x2="0" y2="1"><stop offset="0" stop-color="#f8f8f8"/><stop offset="1" stop-color="#e2e2e2"/></linearGradient></defs><rect x="0" y="0" width="20" height="20" rx="3" fill="url(#g32)"/><text x="3.5" y="17" font-family="Liberation Sans" font-size="14" fill="#4a4a4a">á</text></svg></div><div class="mt" style="left:44px;top:236.8px">Tabella caratteri</div><div class="abs" style="left:18px;top:264.0px;width:20px;height:20px"><svg width="20" height="20" viewBox="0 0 20 20" style="position:absolute;"><rect x="0" y="0" width="20" height="20" rx="2.5" fill="#8c8cd8"/><rect x="4" y="4.0" width="12" height="1.2" fill="#fff"/><rect x="4" y="6.6" width="12" height="1.2" fill="#fff"/><rect x="4" y="9.2" width="12" height="1.2" fill="#fff"/><rect x="4" y="11.8" width="12" height="1.2" fill="#fff"/><rect x="4" y="14.4" width="8" height="1.2" fill="#fff"/></svg></div><div class="mt" style="left:44px;top:266.8px">Editor di testo</div><div class="abs" style="left:18px;top:294.0px;width:20px;height:20px"><svg width="20" height="20" viewBox="0 0 20 20" style="position:absolute;"><defs><linearGradient id="g33" x1="0" y1="0" x2="0" y2="1"><stop offset="0" stop-color="#f8f8f8"/><stop offset="1" stop-color="#e2e2e2"/></linearGradient></defs><rect x="0" y="0" width="20" height="20" rx="3" fill="url(#g33)"/><circle cx="10" cy="10" r="8" fill="#6cbf3c"/><rect x="5.7" y="5.7" width="2.2" height="2.2" fill="#e8f5e0"/><rect x="5.7" y="8.9" width="2.2" height="2.2" fill="#e8f5e0"/><rect x="5.7" y="12.100000000000001" width="2.2" height="2.2" fill="#e8f5e0"/><rect x="8.9" y="5.7" width="2.2" height="2.2" fill="#e8f5e0"/><rect x="8.9" y="8.9" width="2.2" height="2.2" fill="#e8f5e0"/><rect x="8.9" y="12.100000000000001" width="2.2" height="2.2" fill="#e8f5e0"/><rect x="12.100000000000001" y="5.7" width="2.2" height="2.2" fill="#e8f5e0"/><rect x="12.100000000000001" y="8.9" width="2.2" height="2.2" fill="#e8f5e0"/><rect x="12.100000000000001" y="12.100000000000001" width="2.2" height="2.2" fill="#e8f5e0"/></svg></div><div class="mt" style="left:44px;top:296.8px">Gestore applicazioni</div><div class="abs" style="left:18px;top:324.0px;width:20px;height:20px"><svg width="20" height="20" viewBox="0 0 20 20" style="position:absolute;"><rect x="0" y="0" width="20" height="20" rx="2.5" fill="#f0f0f0"/><rect x="3.5" y="4" width="13" height="4.5" rx="2.25" fill="#6cbf3c"/><rect x="10" y="5" width="5.5" height="2.5" rx="1.25" fill="#e8f5e0"/><rect x="3.5" y="11.5" width="13" height="4.5" rx="2.25" fill="#6a6a6a"/><rect x="4.5" y="12.5" width="5.5" height="2.5" rx="1.25" fill="#ddd"/></svg></div><div class="mt" style="left:44px;top:326.8px">Impostazioni di sistema</div><div class="abs" style="left:40px;top:377px;width:32px;height:32px;border-radius:50%;background:#3b3a41"></div><svg width="16" height="16" viewBox="0 0 16 16" style="position:absolute;left:48px;top:385px"><path d="M4.5 7V5a3.5 3.5 0 0 1 7 0v2" stroke="#eee" stroke-width="1.8" fill="none"/><rect x="2.5" y="7" width="11" height="8" rx="1" fill="#eee"/></svg><div class="abs" style="left:84px;top:377px;width:32px;height:32px;border-radius:50%;background:#3b3a41"></div><svg width="16" height="16" viewBox="0 0 16 16" style="position:absolute;left:92px;top:385px"><path d="M11.5 4.5A5.5 5.5 0 1 0 11.5 11.5" stroke="#eee" stroke-width="1.8" fill="none"/><path d="M6.5 8h8M11.5 5l3 3-3 3" stroke="#eee" stroke-width="1.8" fill="none"/></svg><div class="abs" style="left:128px;top:377px;width:32px;height:32px;border-radius:50%;background:#c01c28"></div><svg width="16" height="16" viewBox="0 0 16 16" style="position:absolute;left:136px;top:385px"><path d="M4.8 4.2A5.6 5.6 0 1 0 11.2 4.2" stroke="#fff" stroke-width="1.9" fill="none" stroke-linecap="round"/><path d="M8 1.5v6" stroke="#fff" stroke-width="1.9" stroke-linecap="round"/></svg></div><div class="abs" style="left:222px;top:15px;width:153px;height:30px;border-radius:6px;background:#302f36"></div><div class="abs" style="left:229px;top:22px;width:16px;height:16px"><svg width="16" height="16" viewBox="0 0 16 16" style="position:absolute;"><rect x="3" y="3" width="2.2" height="2.2" fill="#fff"/><rect x="3" y="7" width="2.2" height="2.2" fill="#fff"/><rect x="3" y="11" width="2.2" height="2.2" fill="#fff"/><rect x="7" y="3" width="2.2" height="2.2" fill="#fff"/><rect x="7" y="7" width="2.2" height="2.2" fill="#fff"/><rect x="7" y="11" width="2.2" height="2.2" fill="#fff"/><rect x="11" y="3" width="2.2" height="2.2" fill="#fff"/><rect x="11" y="7" width="2.2" height="2.2" fill="#fff"/><rect x="11" y="11" width="2.2" height="2.2" fill="#fff"/></svg></div><div class="mt" style="left:250px;top:22.8px;letter-spacing:.25px">Tutte le applicazioni</div><div class="abs" style="left:229px;top:52px;width:16px;height:16px"><svg width="16" height="16" viewBox="0 0 16 16" style="position:absolute;"><path d="M2.2 13.8L7.2 8.8" stroke="#e6e6e6" stroke-width="3.2" stroke-linecap="round"/><path d="M7 9L13.8 2.2" stroke="#e6e6e6" stroke-width="1.3"/><circle cx="14" cy="2" r="1.7" fill="#e6e6e6"/><path d="M4.2 4.2L11.8 11.8" stroke="#e6e6e6" stroke-width="2"/><path d="M0.3 3.2A3.6 3.6 0 0 0 5.8 6.2L6.4 5.6A3.6 3.6 0 0 0 3.2 0.3L4.8 2 4.6 4.6 2 4.8z" fill="#e6e6e6"/><path d="M15.7 12.8A3.6 3.6 0 0 0 10.2 9.8L9.6 10.4A3.6 3.6 0 0 0 12.8 15.7L11.2 14 11.4 11.4 14 11.2z" fill="#e6e6e6"/></svg></div><div class="mt" style="left:250px;top:52.8px;letter-spacing:.25px">Accessori</div><div class="abs" style="left:229px;top:82px;width:16px;height:16px"><svg width="16" height="16" viewBox="0 0 16 16" style="position:absolute;"><path d="M1.2 0.5V15.5M4.2 0.5V15.5M4.2 1.2H13.5M4.2 5.5H13.5M11.8 0.5V6.2M14.8 0.5V6.2" stroke="#e6e6e6" stroke-width="1.1" fill="none"/><rect x="2.2" y="1" width="1" height="1" fill="#e6e6e6"/><rect x="2.2" y="3" width="1" height="1" fill="#e6e6e6"/><rect x="2.2" y="5" width="1" height="1" fill="#e6e6e6"/><rect x="2.2" y="7" width="1" height="1" fill="#e6e6e6"/><rect x="2.2" y="9" width="1" height="1" fill="#e6e6e6"/><rect x="2.2" y="11" width="1" height="1" fill="#e6e6e6"/><rect x="2.2" y="13" width="1" height="1" fill="#e6e6e6"/><path d="M7.5 9.5L14.5 8.2V14" stroke="#e6e6e6" stroke-width="1.3" fill="none"/><path d="M8 9.5V14.5" stroke="#e6e6e6" stroke-width="1.3"/><circle cx="6.5" cy="14" r="1.9" fill="#e6e6e6"/><circle cx="13" cy="13.6" r="1.9" fill="#e6e6e6"/></svg></div><div class="mt" style="left:250px;top:82.8px;letter-spacing:.25px">Audio e video</div><div class="abs" style="left:229px;top:112px;width:16px;height:16px"><svg width="16" height="16" viewBox="0 0 16 16" style="position:absolute;"><path d="M7.5 1.5C3.5 1.5 1.5 4.5 2.5 7.5C3.2 9.5 5 9 5 11C5 13.5 6.5 15 9 15C13 15 15.5 11.5 15.5 8C15.5 4 12 1.5 7.5 1.5z" fill="#e6e6e6"/><circle cx="5.5" cy="4.5" r="1.3" fill="#232228"/><circle cx="12.5" cy="7.5" r="1.2" fill="#232228"/><circle cx="11.5" cy="11" r="1.2" fill="#232228"/><circle cx="8.5" cy="12.5" r="1.2" fill="#232228"/><path d="M0.8 15.2L14 2" stroke="#232228" stroke-width="2.6"/><path d="M0.8 15.2L14 2" stroke="#e6e6e6" stroke-width="1.2"/><path d="M0.5 15.5L3.5 11.8 4.3 12.6z" fill="#e6e6e6"/></svg></div><div class="mt" style="left:250px;top:112.8px;letter-spacing:.25px">Grafica</div><div class="abs" style="left:229px;top:142px;width:16px;height:16px"><svg width="16" height="16" viewBox="0 0 16 16" style="position:absolute;"><circle cx="8" cy="8" r="6.9" fill="none" stroke="#e6e6e6" stroke-width="1.3"/><ellipse cx="8" cy="8" rx="3.2" ry="6.9" fill="none" stroke="#e6e6e6" stroke-width="1"/><path d="M8 1.1V14.9M1.1 8H14.9M2.1 4.7H13.9M2.1 11.3H13.9" stroke="#e6e6e6" stroke-width="1"/></svg></div><div class="mt" style="left:250px;top:142.8px;letter-spacing:.25px">Internet</div><div class="abs" style="left:229px;top:172px;width:16px;height:16px"><svg width="16" height="16" viewBox="0 0 16 16" style="position:absolute;"><g transform="rotate(45 8 8)"><path d="M5.2 4V12.5A2.8 2.8 0 0 0 10.8 12.5V3.6A2.3 2.3 0 0 0 6.2 3.6V11" stroke="#e6e6e6" stroke-width="1.2" fill="none" stroke-linecap="round"/></g></svg></div><div class="mt" style="left:250px;top:172.8px;letter-spacing:.25px">Ufficio</div><div class="abs" style="left:229px;top:202px;width:16px;height:16px"><svg width="16" height="16" viewBox="0 0 16 16" style="position:absolute;"><path d="M2.7 0.5V15.5M7.9 0.5V15.5M13.2 0.5V15.5" stroke="#e6e6e6" stroke-width="1.5"/><circle cx="2.7" cy="10.5" r="2" fill="#e6e6e6"/><circle cx="7.9" cy="4.3" r="2" fill="#e6e6e6"/><circle cx="13.2" cy="10.5" r="2" fill="#e6e6e6"/></svg></div><div class="mt" style="left:250px;top:202.8px;letter-spacing:.25px">Preferenze</div><div class="abs" style="left:229px;top:232px;width:16px;height:16px"><svg width="16" height="16" viewBox="0 0 16 16" style="position:absolute;"><circle cx="8" cy="8" r="5.2" fill="none" stroke="#e6e6e6" stroke-width="2"/><rect x="6.8" y="0.2" width="2.4" height="3" fill="#e6e6e6" transform="rotate(0 8 8)"/><rect x="6.8" y="0.2" width="2.4" height="3" fill="#e6e6e6" transform="rotate(45 8 8)"/><rect x="6.8" y="0.2" width="2.4" height="3" fill="#e6e6e6" transform="rotate(90 8 8)"/><rect x="6.8" y="0.2" width="2.4" height="3" fill="#e6e6e6" transform="rotate(135 8 8)"/><rect x="6.8" y="0.2" width="2.4" height="3" fill="#e6e6e6" transform="rotate(180 8 8)"/><rect x="6.8" y="0.2" width="2.4" height="3" fill="#e6e6e6" transform="rotate(225 8 8)"/><rect x="6.8" y="0.2" width="2.4" height="3" fill="#e6e6e6" transform="rotate(270 8 8)"/><rect x="6.8" y="0.2" width="2.4" height="3" fill="#e6e6e6" transform="rotate(315 8 8)"/></svg></div><div class="mt" style="left:250px;top:232.8px;letter-spacing:.25px">Amministrazione</div><div class="abs" style="left:229px;top:262px;width:16px;height:16px"><svg width="16" height="16" viewBox="0 0 16 16" style="position:absolute;"><polygon points="8.00,1.40 9.94,5.93 14.85,6.38 11.14,9.62 12.23,14.42 8.00,11.90 3.77,14.42 4.86,9.62 1.15,6.38 6.06,5.93" fill="none" stroke="#e6e6e6" stroke-width="1.4" stroke-linejoin="round"/></svg></div><div class="mt" style="left:250px;top:262.8px;letter-spacing:.25px">Preferiti</div><div class="abs" style="left:229px;top:292px;width:16px;height:16px"><svg width="16" height="16" viewBox="0 0 16 16" style="position:absolute;"><path d="M2.5 6A6.2 6.2 0 1 1 3.8 12.5" stroke="#e6e6e6" stroke-width="1.5" fill="none"/><path d="M0 6.5H5.2L2.6 10z" fill="#e6e6e6"/><path d="M8.5 3.8V8.5L10.8 10.8" stroke="#e6e6e6" stroke-width="1.3" fill="none"/></svg></div><div class="mt" style="left:250px;top:292.8px;letter-spacing:.25px">File recenti</div><div class="abs" id="applist" style="left:390px;top:15px;width:250px;height:346px;overflow:hidden"><div class="abs" style="left:8px;top:8.4px;width:28px;height:28px"><svg width="28" height="28" viewBox="0 0 42 42" style="position:absolute;"><defs><linearGradient id="g34" x1="0" y1="0" x2="0" y2="1"><stop offset="0" stop-color="#4a84e2"/><stop offset="1" stop-color="#1d4fbf"/></linearGradient></defs><rect x="0.5" y="0.5" width="41" height="41" rx="8.5" fill="url(#g34)" stroke="#1a3a80" stroke-width="1"/><circle cx="20.8" cy="9.3" r="3.8" fill="#fff"/><path d="M7.3 13L20.8 15.6L34.2 13L34.6 15.2L24.4 18.2L23.9 24.6L28.6 35L26.6 35.9L20.8 25.6L15 35.9L13 35L17.7 24.6L17.2 18.2L6.9 15.2z" fill="#fff"/></svg></div><div class="mt" style="left:44px;top:8.6px;color:#dadada">Accessibilità</div><div class="sub" style="left:44px;top:23.6px">Configura le caratteristiche di access…</div><div class="abs" style="left:8px;top:54.4px;width:28px;height:28px"><svg width="28" height="28" viewBox="0 0 42 42" style="position:absolute;"><defs><linearGradient id="g35" x1="0" y1="0" x2="0" y2="1"><stop offset="0" stop-color="#44c0f0"/><stop offset="1" stop-color="#2a70e0"/></linearGradient></defs><rect x="0.5" y="0.5" width="41" height="41" rx="8.5" fill="url(#g35)" stroke="#2a5aa0" stroke-width="1"/><defs><linearGradient id="g36" x1="0" y1="0" x2="0" y2="1"><stop offset="0" stop-color="#ffffff"/><stop offset="1" stop-color="#e8e8ea"/></linearGradient></defs><g fill="url(#g36)"><circle cx="10" cy="26.8" r="6"/><circle cx="21.5" cy="17.5" r="10"/><circle cx="30.3" cy="25.4" r="7.3"/><rect x="10" y="21" width="20.5" height="11.8"/></g></svg></div><div class="mt" style="left:44px;top:54.6px;color:#dadada">Account online</div><div class="sub" style="left:44px;top:69.6px">Collegati ai tuoi dati nel cloud</div><div class="abs" style="left:8px;top:100.4px;width:28px;height:28px"><svg width="28" height="28" viewBox="0 0 28 28" style="position:absolute;"><defs><linearGradient id="g37" x1="0" y1="0" x2="0" y2="1"><stop offset="0" stop-color="#6a6c6e"/><stop offset="1" stop-color="#4e7c84"/></linearGradient></defs><rect x="0" y="0" width="28" height="28" rx="5" fill="#5c5f62"/><path d="M0 5a5 5 0 0 1 5-5h18a5 5 0 0 1 5 5v13H0z" fill="url(#g37)"/><rect x="0" y="17.6" width="28" height="1.8" fill="#9ae6f0"/></svg></div><div class="mt" style="left:44px;top:100.6px;color:#dadada">Acquisizione documenti</div><div class="sub" style="left:44px;top:115.6px">Crea una copia digitale delle proprie …</div><div class="abs" style="left:8px;top:146.4px;width:28px;height:28px"><svg width="28" height="28" viewBox="0 0 28 28" style="position:absolute;"><defs><linearGradient id="g38" x1="0" y1="0" x2="0" y2="1"><stop offset="0" stop-color="#4a90e2"/><stop offset="1" stop-color="#6548c4"/></linearGradient></defs><rect x="0" y="0" width="28" height="28" rx="5" fill="url(#g38)"/><circle cx="14" cy="14" r="7" fill="#fff"/><rect x="12.2" y="4.5" width="3.6" height="4" rx=".8" fill="#fff" transform="rotate(0 14 14)"/><rect x="12.2" y="4.5" width="3.6" height="4" rx=".8" fill="#fff" transform="rotate(45 14 14)"/><rect x="12.2" y="4.5" width="3.6" height="4" rx=".8" fill="#fff" transform="rotate(90 14 14)"/><rect x="12.2" y="4.5" width="3.6" height="4" rx=".8" fill="#fff" transform="rotate(135 14 14)"/><rect x="12.2" y="4.5" width="3.6" height="4" rx=".8" fill="#fff" transform="rotate(180 14 14)"/><rect x="12.2" y="4.5" width="3.6" height="4" rx=".8" fill="#fff" transform="rotate(225 14 14)"/><rect x="12.2" y="4.5" width="3.6" height="4" rx=".8" fill="#fff" transform="rotate(270 14 14)"/><rect x="12.2" y="4.5" width="3.6" height="4" rx=".8" fill="#fff" transform="rotate(315 14 14)"/><circle cx="14" cy="14" r="3.3" fill="#5a6cd4"/></svg></div><div class="mt" style="left:44px;top:146.6px;color:#dadada">Amministrazione di sistema</div><div class="sub" style="left:44px;top:161.6px">Configura il sistema</div><div class="abs" style="left:8px;top:192.4px;width:28px;height:28px"><svg width="28" height="28" viewBox="0 0 28 28" style="position:absolute;"><defs><linearGradient id="g39" x1="0" y1="0" x2="0" y2="1"><stop offset="0" stop-color="#f8b030"/><stop offset="1" stop-color="#f07a20"/></linearGradient></defs><rect x="0" y="0" width="28" height="28" rx="5" fill="url(#g39)"/><path d="M14 14L28 17V23a5 5 0 0 1-5 5H12z" fill="#3a5ad8"/><path d="M14 14L12 28H9z" fill="#e0302a"/></svg></div><div class="mt" style="left:44px;top:192.6px;color:#dadada">Analizzatore di utilizzo del disco</div><div class="sub" style="left:44px;top:207.6px">Controlla la dimensione delle cartell…</div><div class="abs" style="left:8px;top:238.4px;width:28px;height:28px"><svg width="28" height="28" viewBox="0 0 42 42" style="position:absolute;"><defs><linearGradient id="g40" x1="0" y1="0" x2="0" y2="1"><stop offset="0" stop-color="#82d0ee"/><stop offset="1" stop-color="#3a86e4"/></linearGradient><clipPath id="g41"><rect x="0.5" y="0.5" width="41" height="41" rx="8.5"/></clipPath></defs><g clip-path="url(#g41)"><rect width="42" height="42" fill="url(#g40)"/><circle cx="0" cy="0" r="12.8" fill="#fff"/><circle cx="42" cy="42" r="13" fill="#a8ccf4"/></g><rect x="0.5" y="0.5" width="41" height="41" rx="8.5" fill="none" stroke="#5a3c78" stroke-width="1"/></svg></div><div class="mt" style="left:44px;top:238.6px;color:#dadada">Angoli attivi</div><div class="sub" style="left:44px;top:253.6px">Gestisci impostazioni degli angoli attivi</div><div class="abs" style="left:8px;top:284.4px;width:28px;height:28px"><svg width="28" height="28" viewBox="0 0 42 42" style="position:absolute;"><defs><linearGradient id="g42" x1="0" y1="0" x2="0" y2="1"><stop offset="0" stop-color="#86cdf2"/><stop offset="1" stop-color="#3a88e6"/></linearGradient><clipPath id="g43"><rect x="0.5" y="0.5" width="41" height="41" rx="8.5"/></clipPath></defs><g clip-path="url(#g43)"><rect width="42" height="42" fill="url(#g42)"/><rect y="30" width="42" height="12" fill="#262626"/><rect x="6" y="29" width="5" height="5" fill="#fff"/><rect x="14" y="29" width="5" height="5" fill="#fff"/><rect x="22" y="29" width="5" height="5" fill="#fff"/><rect x="30" y="29" width="5" height="5" fill="#fff"/></g><rect x="0.5" y="0.5" width="41" height="41" rx="8.5" fill="none" stroke="#2a2a2a" stroke-width="1"/></svg></div><div class="mt" style="left:44px;top:284.6px;color:#dadada">Applet</div><div class="sub" style="left:44px;top:299.6px">Gestione applet di Cinnamon</div><div class="abs" style="left:8px;top:330.4px;width:28px;height:28px"><svg width="28" height="28" viewBox="0 0 42 42" style="position:absolute;"><defs><linearGradient id="g44" x1="0" y1="0" x2="0" y2="1"><stop offset="0" stop-color="#6cc4f0"/><stop offset="1" stop-color="#2f76de"/></linearGradient></defs><rect x="0.5" y="0.5" width="41" height="41" rx="8.5" fill="url(#g44)" stroke="#2a5aa0" stroke-width="1"/><rect x="19.5" y="8.5" width="15" height="11.5" fill="#f4f4f4"/><rect x="8" y="17" width="15" height="12" fill="#e6e6e6"/></svg></div><div class="mt" style="left:44px;top:330.6px;color:#dadada">Applicazioni d'avvio</div><div class="sub" style="left:44px;top:345.6px">Gestione applicazioni avviate all'accesso</div></div><div class="abs" style="left:390px;top:311px;width:250px;height:51px;background:linear-gradient(to bottom,rgba(35,34,40,0),rgba(35,34,40,.6) 40%,rgba(35,34,40,.95))"></div><div class="abs" style="left:642px;top:23px;width:5px;height:32px;border-radius:3px;background:#2e2d33"></div><div class="abs" style="left:245px;top:372px;width:387px;height:1px;background:#2b2a30"></div><div class="abs" style="left:222px;top:383px;width:433px;height:31px;border-radius:3px;background:#302f37;border:1px solid #2b82b4"></div><svg width="14" height="14" viewBox="0 0 14 14" style="position:absolute;left:633px;top:392px"><circle cx="6" cy="6" r="4.5" fill="none" stroke="#eee" stroke-width="1.7"/><path d="M9.3 9.3L12.5 12.5" stroke="#eee" stroke-width="1.9" stroke-linecap="round"/></svg></div>
<div id="bar"><div class="abs" style="left:0;top:0;width:44px;height:41px;background:#2d2c34"></div><svg width="44" height="41" viewBox="0 0 44 41" style="position:absolute;left:0;top:0"><circle cx="22" cy="21" r="14.6" fill="none" stroke="#fff" stroke-width="3"/><path d="M14.65 13V24.6Q14.65 27.8 17.9 27.8H26.1Q29.35 27.8 29.35 24.6V18.4Q29.35 15.4 26.4 15.4H19.55V23.9M24.4 15.4V23.9" stroke="#fff" stroke-width="2.7" fill="none"/></svg><div class="abs" style="left:52px;top:3px;width:1px;height:35px;background:#34333a"></div><svg width="29" height="27" viewBox="0 0 29 27" style="position:absolute;left:65.5px;top:6px"><path d="M0.5 3a2 2 0 0 1 2-2h8l3 3h13a2 2 0 0 1 2 2v18.5a2 2 0 0 1-2 2h-24a2 2 0 0 1-2-2z" fill="#e8a94a"/><rect x="2.5" y="5.5" width="24" height="3" fill="#fbe3b0"/><path d="M0.5 8h28v16.5a2 2 0 0 1-2 2h-24a2 2 0 0 1-2-2z" fill="#f6c46c"/></svg><svg width="29" height="29" viewBox="0 0 29 29" style="position:absolute;left:109.8px;top:5.7px"><defs><linearGradient id="ffg" x1="0" y1="0" x2="0" y2="1"><stop offset="0" stop-color="#ff7e3a"/><stop offset="1" stop-color="#f2406c"/></linearGradient></defs><rect x="0" y="0" width="28.4" height="28.4" rx="6" fill="url(#ffg)"/><circle cx="14" cy="16" r="10.2" fill="#fff"/><circle cx="14.2" cy="14.8" r="4.3" fill="#f2545a"/><path d="M8.5 8.5Q11 7.2 13.5 9.5L12 12.5Q10 11 8.5 12z" fill="#f7685a"/><path d="M12.8 9.8L16.8 3.8L21.5 9.5z" fill="#fff"/><path d="M5.8 11L7.4 6.6L10 9.6z" fill="#fff"/></svg><svg width="29" height="29" viewBox="0 0 29 29" style="position:absolute;left:154px;top:5.6px"><rect x="0.5" y="0.5" width="27.5" height="28" rx="6" fill="#262626" stroke="#0e0e0e" stroke-width="1"/><text x="2.8" y="9.6" font-family="Liberation Sans" font-weight="bold" font-size="9.5" fill="#eee">$</text><rect x="9.2" y="10.2" width="5.8" height="1.3" fill="#eee"/></svg><div class="abs" style="left:193px;top:0;width:38px;height:41px;background:#2d2c34"></div><div class="abs" style="left:193px;top:38.5px;width:38px;height:2.5px;background:#2f8fd8"></div><svg width="29" height="29" viewBox="0 0 29 29" style="position:absolute;left:198px;top:5.5px"><rect x="0" y="0" width="29" height="29" rx="6" fill="#f0f0f0"/><rect x="5" y="6" width="19" height="7" rx="3.5" fill="#6cbf3c"/><rect x="14.5" y="7.3" width="8.2" height="4.4" rx="2.2" fill="#e4f3dc"/><rect x="5" y="16" width="19" height="7" rx="3.5" fill="#7a7a7a"/><rect x="6.3" y="17.3" width="8.2" height="4.4" rx="2.2" fill="#d8d8d8"/></svg><svg width="16" height="17" viewBox="0 0 16 17" style="position:absolute;left:1280px;top:12.5px"><rect x="1.1" y="3.1" width="13.8" height="12.8" rx="1.5" fill="none" stroke="#eee" stroke-width="1.6"/><rect x="5" y="1.5" width="6" height="3.5" rx="1" fill="#eee"/><circle cx="8" cy="1.8" r="1.3" fill="#eee"/><rect x="7" y="7" width="2" height="4.2" fill="#eee"/><rect x="7" y="12.3" width="2" height="2" fill="#eee"/></svg><svg width="17" height="17" viewBox="0 0 17 17" style="position:absolute;left:1306px;top:12.5px"><path d="M8 1L14.5 3.5V8c0 4-3 6.5-6.5 8C4.5 14.5 1.5 12 1.5 8V3.5z" fill="none" stroke="#ddd" stroke-width="1.5"/><path d="M8 3.5L12.3 5.2V8.3c0 2.6-2 4.5-4.3 5.5z" fill="#777"/><path d="M8 3.5L3.7 5.2V8.3c0 2.6 2 4.5 4.3 5.5z" fill="#ddd"/><circle cx="13" cy="13.2" r="3.2" fill="#f07a3c"/></svg><svg width="17" height="17" viewBox="0 0 17 17" style="position:absolute;left:1334.5px;top:13px"><rect x="5" y="0.5" width="7" height="5.5" fill="#e4e4e4"/><path d="M8.5 6v3.5M3 12V9.3h11V12M0.5 9.3h16" stroke="#e4e4e4" stroke-width="1.5" fill="none"/><rect x="0" y="11" width="6.5" height="5.5" fill="#e4e4e4"/><rect x="10" y="11" width="6.5" height="5.5" fill="#e4e4e4"/></svg><svg width="17" height="17" viewBox="0 0 17 17" style="position:absolute;left:1362.5px;top:13px"><path d="M0.5 6h3L8.5 1.5v14L3.5 11h-3z" fill="#e4e4e4"/><path d="M10.5 5.5q2 3 0 6" stroke="#e4e4e4" stroke-width="1.6" fill="none"/><path d="M13 3q3.8 5.5 0 11" stroke="#777" stroke-width="1.5" fill="none"/></svg><div class="abs" style="left:1397.5px;top:14.5px;font-size:12px;line-height:14px;font-weight:bold;color:#e6e9ef;letter-spacing:0.7px">7.40</div><div class="abs" style="left:1430px;top:0;width:10px;height:41px;background:#2d2c34"></div></div></body></html>
